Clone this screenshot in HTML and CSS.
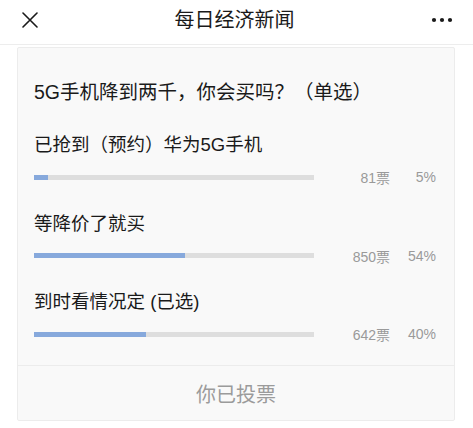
FILE: index.html
```html
<!DOCTYPE html>
<html lang="zh-CN">
<head>
<meta charset="utf-8">
<title>每日经济新闻</title>
<link rel="stylesheet" href="styles.css">
</head>
<body>
<header class="topbar">
  <span class="close" aria-label="关闭">
    <svg width="16" height="16" viewBox="0 0 16 16"><path d="M1 1 L15 15 M15 1 L1 15" stroke="#1a1a1a" stroke-width="1.6" fill="none" stroke-linecap="round"/></svg>
  </span>
  <h1 class="title">每日经济新闻</h1>
  <span class="more" aria-label="更多">
    <svg width="22" height="6" viewBox="0 0 22 6"><circle cx="3" cy="3" r="2.1" fill="#1a1a1a"/><circle cx="11" cy="3" r="2.1" fill="#1a1a1a"/><circle cx="19" cy="3" r="2.1" fill="#1a1a1a"/></svg>
  </span>
</header>
<section class="card">
  <div class="body">
    <div class="question">5G手机降到两千，你会买吗？（单选）</div>
    <div class="options">
      <div class="option">
        <div class="label">已抢到（预约）华为5G手机</div>
        <div class="stat">
          <div class="track"><div class="fill" style="width:5%"></div></div>
          <span class="votes">81票</span>
          <span class="pct">5%</span>
        </div>
      </div>
      <div class="option">
        <div class="label">等降价了就买</div>
        <div class="stat">
          <div class="track"><div class="fill" style="width:54%"></div></div>
          <span class="votes">850票</span>
          <span class="pct">54%</span>
        </div>
      </div>
      <div class="option">
        <div class="label">到时看情况定 (已选)</div>
        <div class="stat">
          <div class="track"><div class="fill" style="width:40%"></div></div>
          <span class="votes">642票</span>
          <span class="pct">40%</span>
        </div>
      </div>
    </div>
  </div>
  <div class="footer">你已投票</div>
</section>
</body>
</html>
```

FILE: styles.css
```css
* { box-sizing: border-box; }
html, body { margin: 0; padding: 0; background: #fff; }
body {
  font-family: "Liberation Sans", "Noto Sans CJK SC", sans-serif;
  color: #1a1a1a;
  width: 473px;
}
.topbar {
  height: 45px;
  border-bottom: 1px solid #ededed;
  display: flex;
  align-items: center;
  padding: 0 0 5px 0;
  position: relative;
}
.close {
  display: flex;
  margin-left: 22px;
  width: 16px;
  height: 16px;
}
.title {
  flex: 1;
  margin: 0;
  text-align: center;
  font-size: 20px;
  font-weight: normal;
  line-height: 28px;
  color: #1a1a1a;
}
.more {
  display: flex;
  margin-right: 20px;
  width: 22px;
  height: 6px;
}
.card {
  margin: 2px 18px 0 17px;
  border: 1px solid #ececec;
  border-radius: 2px;
  background: #f9f9f9;
}
.body {
  padding: 31px 18px 21px 16px;
}
.question {
  font-size: 19.5px;
  line-height: 26px;
  color: #1a1a1a;
}
.options {
  margin-top: 28px;
  display: flex;
  flex-direction: column;
  gap: 24.5px;
}
.label {
  font-size: 18.5px;
  line-height: 24px;
  color: #1a1a1a;
}
.stat {
  margin-top: 10px;
  height: 20px;
  display: flex;
  align-items: center;
}
.track {
  width: 280px;
  height: 5px;
  background: #dedede;
}
.fill {
  height: 100%;
  background: #87a9dc;
}
.votes {
  width: 76px;
  text-align: right;
  font-size: 14px;
  color: #9a9a9a;
}
.pct {
  width: 46px;
  text-align: right;
  font-size: 14px;
  color: #9a9a9a;
}
.footer {
  border-top: 1px solid #ececec;
  height: 55px;
  display: flex;
  align-items: center;
  justify-content: center;
  font-size: 20px;
  color: #9b9b9b;
}
```
